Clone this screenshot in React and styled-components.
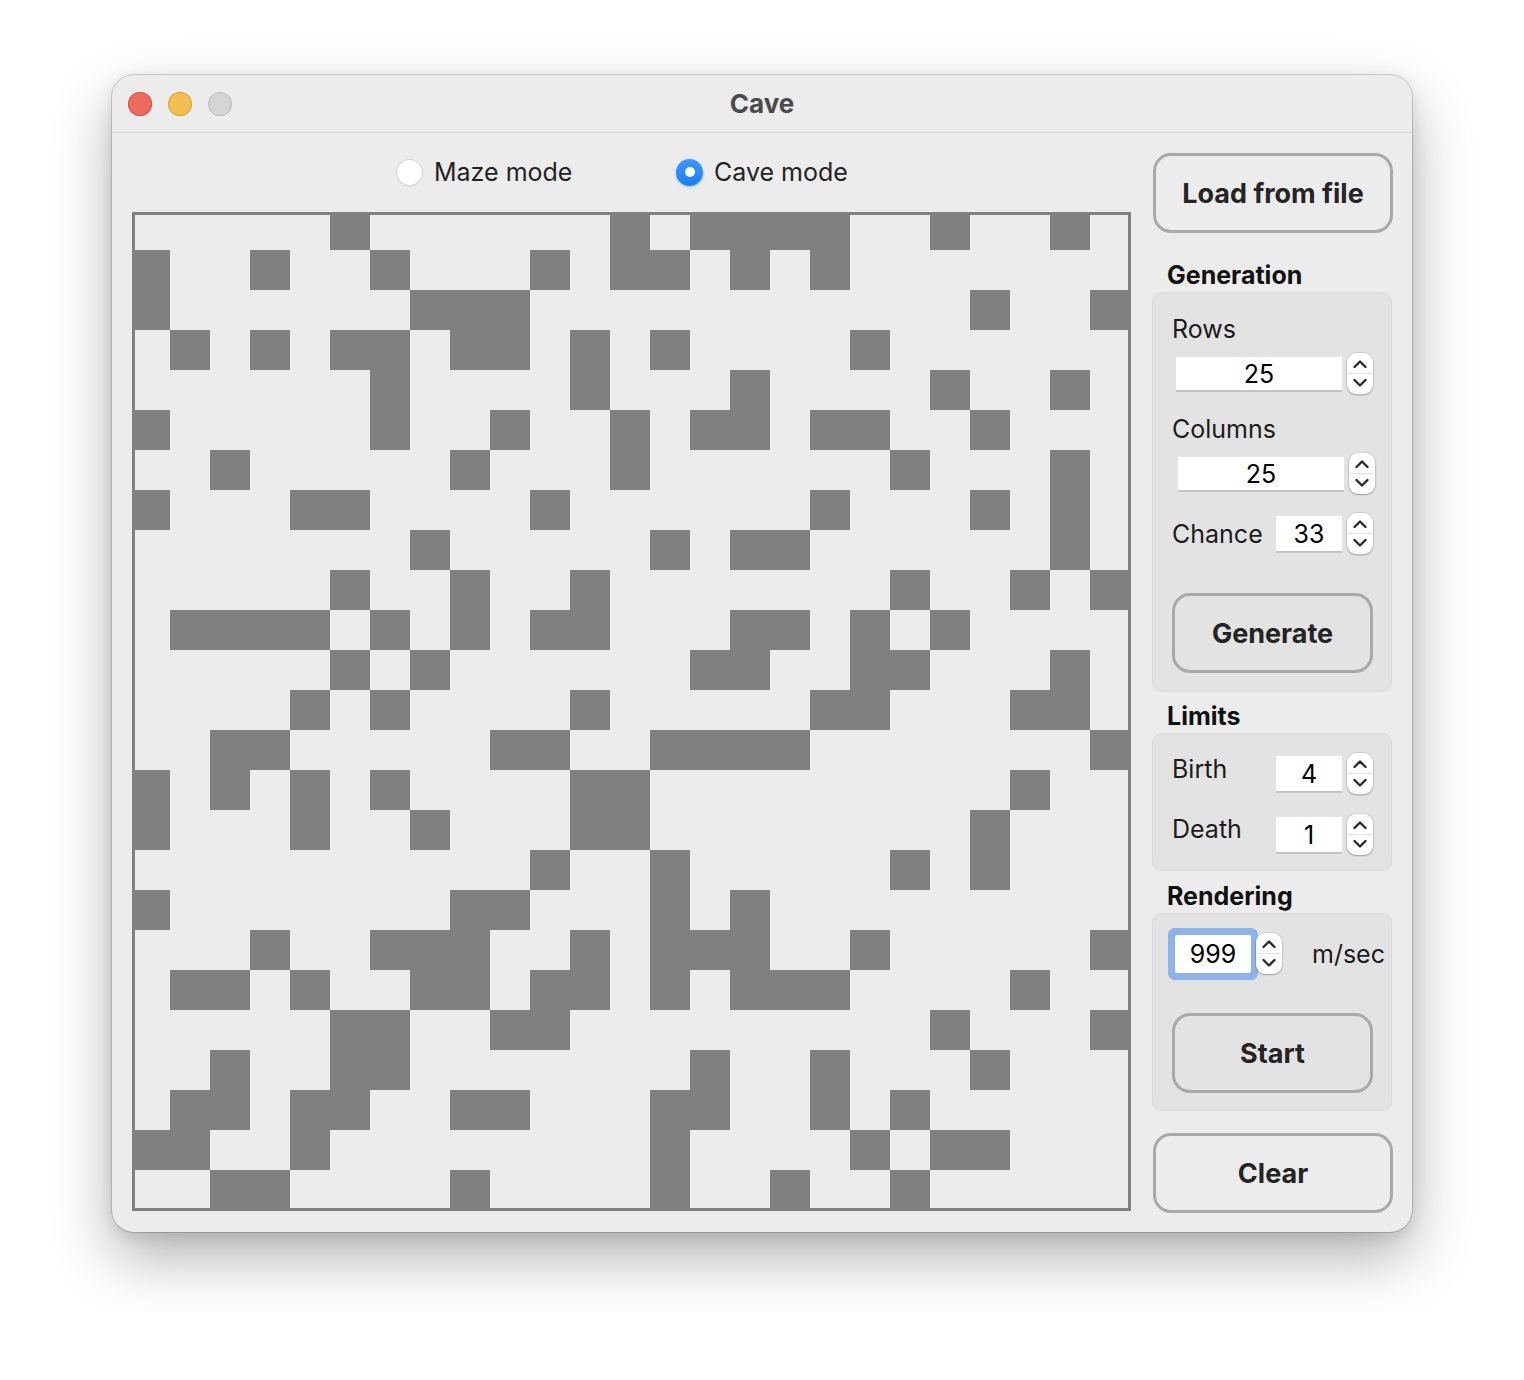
import React from 'react';
import styled, { createGlobalStyle } from 'styled-components';

// wall cells of the 25x25 cave, one list of column indexes per row
const WALLS = [
  [5, 12, 14, 15, 16, 17, 20, 23],
  [0, 3, 6, 10, 12, 13, 15, 17],
  [0, 7, 8, 9, 21, 24],
  [1, 3, 5, 6, 8, 9, 11, 13, 18],
  [6, 11, 15, 20, 23],
  [0, 6, 9, 12, 14, 15, 17, 18, 21],
  [2, 8, 12, 19, 23],
  [0, 4, 5, 10, 17, 21, 23],
  [7, 13, 15, 16, 23],
  [5, 8, 11, 19, 22, 24],
  [1, 2, 3, 4, 6, 8, 10, 11, 15, 16, 18, 20],
  [5, 7, 14, 15, 18, 19, 23],
  [4, 6, 11, 17, 18, 22, 23],
  [2, 3, 9, 10, 13, 14, 15, 16, 24],
  [0, 2, 4, 6, 11, 12, 22],
  [0, 4, 7, 11, 12, 21],
  [10, 13, 19, 21],
  [0, 8, 9, 13, 15],
  [3, 6, 7, 8, 11, 13, 14, 15, 18, 24],
  [1, 2, 4, 7, 8, 10, 11, 13, 15, 16, 17, 22],
  [5, 6, 9, 10, 20, 24],
  [2, 5, 6, 14, 17, 21],
  [1, 2, 4, 5, 8, 9, 13, 14, 17, 19],
  [0, 1, 4, 13, 18, 20, 21],
  [2, 3, 8, 13, 16, 19],
];

const GlobalStyle = createGlobalStyle`
  html, body {
    margin: 0;
    padding: 0;
    background: #ffffff;
  }
  body {
    font-family: Inter, "Noto Sans", sans-serif;
    -webkit-font-smoothing: antialiased;
  }
  * {
    box-sizing: border-box;
  }
`;

const App = () => {
  return (
    <>
      <GlobalStyle />
      <Page>
        <Window>
          <TitleBar>
            <Lights>
              <Light $color='#ed6a5e' $edge='#d2564a' />
              <Light $color='#f5bf4f' $edge='#d9a23b' />
              <Light $color='#d5d5d5' $edge='#bebebe' />
            </Lights>
            <Title>Cave</Title>
            <span />
          </TitleBar>

          <Body>
            <Stage>
              <ModeRow>
                <ModeOption $width='280px'>
                  <Radio />
                  Maze mode
                </ModeOption>
                <ModeOption>
                  <Radio $on />
                  Cave mode
                </ModeOption>
              </ModeRow>
              <Frame>
                <Cells>
                  {WALLS.map((row, r) =>
                    Array.from({ length: 25 }, (_, c) => (
                      <Cell key={`${r}-${c}`} $wall={row.includes(c)} />
                    ))
                  )}
                </Cells>
              </Frame>
            </Stage>

            <Side>
              <PushButton $w={240} $left={1}>Load from file</PushButton>

              <SectionTitle $top={27}>Generation</SectionTitle>
              <Group $pad='21px 19px 18px'>
                <Label>Rows</Label>
                <SpinRow $top={9} $indent={4}>
                  <Spin value='25' w={166} h={36} />
                </SpinRow>
                <Label $top={20}>Columns</Label>
                <SpinRow $top={9} $indent={6}>
                  <Spin value='25' w={166} h={36} />
                </SpinRow>
                <ParamRow $top={19}>
                  <Label>Chance</Label>
                  <Spin value='33' w={66} h={38} />
                </ParamRow>
                <PushButton $w={201} $top={39}>Generate</PushButton>
              </Group>

              <SectionTitle $top={9}>Limits</SectionTitle>
              <Group $pad='19px 19px 15px'>
                <ParamRow $align='flex-start'>
                  <Label $top={1}>Birth</Label>
                  <Spin value='4' w={66} h={38} />
                </ParamRow>
                <ParamRow $align='flex-start' $top={20}>
                  <Label>Death</Label>
                  <Spin value='1' w={66} h={38} />
                </ParamRow>
              </Group>

              <SectionTitle $top={10}>Rendering</SectionTitle>
              <Group $pad='19px 19px 17px'>
                <SpinRow $indent={3}>
                  <Spin value='999' w={76} h={38} focus />
                  <Unit>m/sec</Unit>
                </SpinRow>
                <PushButton $w={201} $top={39}>Start</PushButton>
              </Group>

              <PushButton $w={240} $left={1} $top={22}>Clear</PushButton>
            </Side>
          </Body>
        </Window>
      </Page>
    </>
  );
};

const Spin = ({ value, w, h, focus }) => (
  <SpinBox>
    <Field $w={w} $h={h} $focus={focus}>{value}</Field>
    <Stepper>
      <svg width='26' height='41' viewBox='0 0 26 41'>
        <path d='M7.5 14 L13 8.5 L18.5 14' fill='none' stroke='#2b2b2b' strokeWidth='2.4' strokeLinecap='round' strokeLinejoin='round' />
        <line x1='1' y1='20.5' x2='25' y2='20.5' stroke='#e3e3e3' strokeWidth='1' />
        <path d='M7.5 27 L13 32.5 L18.5 27' fill='none' stroke='#2b2b2b' strokeWidth='2.4' strokeLinecap='round' strokeLinejoin='round' />
      </svg>
    </Stepper>
  </SpinBox>
);

export default App;

const Page = styled.div`
  padding: 75px 0 80px 112px;
`;

const Window = styled.div`
  width: 1300px;
  height: 1157px;
  background: #ececec;
  border-radius: 22px;
  box-shadow: 0 0 0 1px rgba(0, 0, 0, 0.16), 0 26px 60px rgba(0, 0, 0, 0.3), 0 4px 16px rgba(0, 0, 0, 0.1);
  overflow: hidden;
  display: flex;
  flex-direction: column;
`;

const TitleBar = styled.div`
  height: 58px;
  display: grid;
  grid-template-columns: 1fr auto 1fr;
  align-items: center;
  padding: 0 16px;
  border-bottom: 1px solid #d4d4d4;
`;

const Lights = styled.div`
  display: flex;
  gap: 16px;
`;

const Light = styled.span`
  width: 24px;
  height: 24px;
  border-radius: 50%;
  background: ${(p) => p.$color};
  box-shadow: inset 0 0 0 1px ${(p) => p.$edge};
`;

const Title = styled.div`
  font-size: 26px;
  font-weight: 700;
  color: #4a4a4a;
`;

const Body = styled.div`
  display: flex;
  gap: 22px;
  padding: 0 18px;
`;

const Stage = styled.div`
  width: 1000px;
  padding-top: 17px;
  display: flex;
  flex-direction: column;
`;

const ModeRow = styled.div`
  height: 44px;
  display: flex;
  align-items: center;
  padding-left: 266px;
`;

const ModeOption = styled.label`
  display: flex;
  align-items: center;
  gap: 11px;
  width: ${(p) => p.$width || 'auto'};
  font-size: 25px;
  color: #232323;
`;

const Radio = styled.span`
  width: 27px;
  height: 27px;
  border-radius: 50%;
  display: flex;
  align-items: center;
  justify-content: center;
  background: ${(p) => (p.$on ? 'linear-gradient(#3b98ff, #1a7ef7)' : '#ffffff')};
  box-shadow: ${(p) =>
    p.$on ? '0 1px 3px rgba(20, 110, 250, 0.35)' : 'inset 0 0 0 1px #d2d2d2, 0 1px 1px rgba(0, 0, 0, 0.05)'};

  &::after {
    content: '';
    display: ${(p) => (p.$on ? 'block' : 'none')};
    width: 10px;
    height: 10px;
    border-radius: 50%;
    background: #ffffff;
  }
`;

const Frame = styled.div`
  margin: 18px 0 0 2px;
  width: 999px;
  height: 999px;
  border: 3px solid #808080;
  overflow: hidden;
`;

const Cells = styled.div`
  width: 1000px;
  margin: -5px 0 0 -5px;
  display: grid;
  grid-template-columns: repeat(25, 40px);
  grid-auto-rows: 40px;
`;

const Cell = styled.div`
  background: ${(p) => (p.$wall ? '#808080' : '#ececec')};
`;

const Side = styled.div`
  width: 242px;
  padding-top: 20px;
  display: flex;
  flex-direction: column;
`;

const PushButton = styled.button`
  width: ${(p) => p.$w}px;
  height: 80px;
  margin: ${(p) => p.$top || 0}px 0 0 ${(p) => p.$left || 0}px;
  padding: 0;
  border: 3px solid #a9a9a9;
  border-radius: 18px;
  background: transparent;
  font-family: Inter, "Noto Sans", sans-serif;
  font-size: 27px;
  font-weight: 700;
  color: #242424;
`;

const SectionTitle = styled.div`
  margin: ${(p) => p.$top}px 0 2px 15px;
  line-height: 30px;
  font-size: 25px;
  font-weight: 700;
  color: #111111;
`;

const Group = styled.div`
  width: 240px;
  padding: ${(p) => p.$pad};
  background: #e3e3e3;
  border: 1px solid #d9d9d9;
  border-radius: 10px;
  display: flex;
  flex-direction: column;
`;

const Label = styled.div`
  margin-top: ${(p) => p.$top || 0}px;
  line-height: 30px;
  font-size: 25px;
  color: #1c1c1c;
`;

const SpinRow = styled.div`
  margin: ${(p) => p.$top || 0}px 0 0 ${(p) => p.$indent || 0}px;
  display: flex;
  align-items: center;
`;

const ParamRow = styled.div`
  margin-top: ${(p) => p.$top || 0}px;
  width: 201px;
  display: flex;
  align-items: ${(p) => p.$align || 'center'};
  justify-content: space-between;
`;

const SpinBox = styled.div`
  display: flex;
  align-items: center;
  gap: 5px;
  height: 41px;
`;

const Field = styled.span`
  width: ${(p) => p.$w}px;
  height: ${(p) => p.$h}px;
  display: flex;
  align-items: center;
  justify-content: center;
  background: #ffffff;
  font-size: 25px;
  color: #000000;
  border-radius: ${(p) => (p.$focus ? '2px' : '0')};
  box-shadow: ${(p) =>
    p.$focus
      ? '0 0 0 7px #8cb3ec'
      : 'inset 0 -2px 0 #c3c3c3, inset 0 1px 0 #e6e6e6'};
`;

const Stepper = styled.span`
  position: relative;
  z-index: 1;
  width: 26px;
  height: 41px;
  border-radius: 9px;
  background: #ffffff;
  box-shadow: 0 0 0 1px rgba(0, 0, 0, 0.07), 0 1px 2px rgba(0, 0, 0, 0.25);
  display: flex;
`;

const Unit = styled.span`
  margin-left: 30px;
  font-size: 25px;
  color: #1c1c1c;
`;
